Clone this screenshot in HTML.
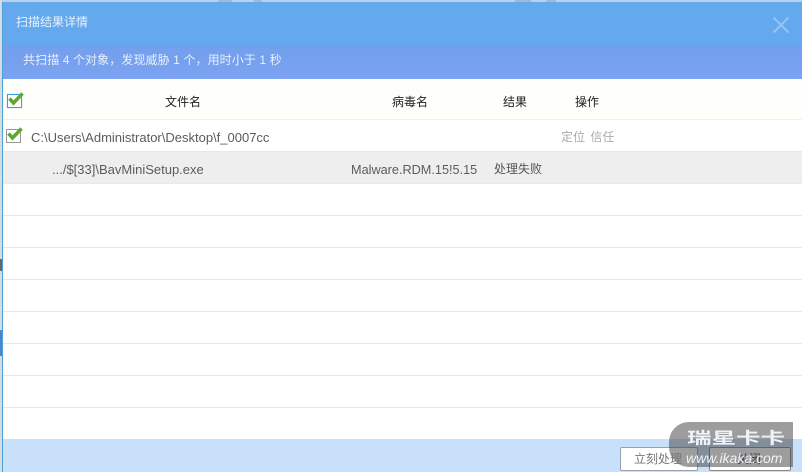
<!DOCTYPE html>
<html>
<head>
<meta charset="utf-8">
<style>
html,body{margin:0;padding:0;width:802px;height:472px;overflow:hidden;background:#fff}
body{position:relative;font-family:"Liberation Sans","Noto Sans CJK SC",sans-serif;font-size:12px;color:#555}
.a{position:absolute;white-space:nowrap}
.line{position:absolute;left:3px;right:0;height:1px;background:#e8e8e8}
</style>
</head>
<body>
<!-- background bits -->
<div class="a" style="left:0;top:0;width:802px;height:2px;background:#b9d3e6"></div>
<div class="a" style="left:218px;top:0;width:14px;height:2px;background:#9dbccd"></div>
<div class="a" style="left:254px;top:0;width:8px;height:2px;background:#9dbccd"></div>
<div class="a" style="left:515px;top:0;width:16px;height:2px;background:#9dbccd"></div>
<div class="a" style="left:546px;top:0;width:10px;height:2px;background:#9dbccd"></div>
<div class="a" style="left:0;top:0;width:2px;height:472px;background:#d4dde2"></div>
<div class="a" style="left:0;top:259px;width:2px;height:12px;background:#666"></div>
<div class="a" style="left:0;top:330px;width:2px;height:26px;background:#4a87d0"></div>
<div class="a" style="left:2px;top:2px;width:1px;height:470px;background:#4f9fd8"></div>

<!-- title -->
<div class="a" style="left:3px;top:2px;width:799px;height:44px;background:#64a9ee"></div>
<div class="a" style="left:16px;top:13px;font-size:12px;line-height:18px;color:#e6f1fc">扫描结果详情</div>
<svg class="a" style="left:771px;top:15px" width="20" height="20" viewBox="0 0 20 20"><path d="M2.500 2.500L17.500 17.500M17.500 2.500L2.500 17.500" stroke="#97c4f3" stroke-width="2" fill="none"/></svg>

<!-- summary -->
<div class="a" style="left:3px;top:46px;width:799px;height:33px;background:linear-gradient(#729fec,#7ba3f2)"></div>
<div class="a" style="left:23px;top:51px;font-size:12px;line-height:18px;color:#e8f0fc;letter-spacing:.1px">共扫描 4 个对象，发现威胁 1 个，用时小于 1 秒</div>

<!-- header -->
<div class="a" style="left:3px;top:79px;width:799px;height:40px;background:#fefefa"></div>
<div class="line" style="top:119px;background:#eef0f0"></div>
<div class="a" style="left:7px;top:94px;width:13px;height:12px;border:1px solid #3aa0d8;box-shadow:0 0 1px #8fd0f0;background:#fff"></div>
<svg class="a" style="left:7px;top:91px" width="18" height="15" viewBox="0 0 18 15"><path d="M2.500 7.500L6.500 12L15.500 2.500" stroke="#5fa82e" stroke-width="3.500" fill="none"/></svg>
<div class="a" style="left:165px;top:93px;line-height:18px;color:#222">文件名</div>
<div class="a" style="left:392px;top:93px;line-height:18px;color:#222">病毒名</div>
<div class="a" style="left:503px;top:93px;line-height:18px;color:#222">结果</div>
<div class="a" style="left:575px;top:93px;line-height:18px;color:#222">操作</div>

<!-- row 1 -->
<div class="a" style="left:6px;top:129px;width:13px;height:12px;border:1px solid #999;background:#fff"></div>
<svg class="a" style="left:6px;top:126px" width="18" height="15" viewBox="0 0 18 15"><path d="M2.500 7.500L6.500 12L15.500 2.500" stroke="#5fa82e" stroke-width="3.500" fill="none"/></svg>
<div class="a" style="left:31px;top:129px;line-height:18px;color:#5c5c5c;font-size:13px;width:240px;overflow:hidden">C:\Users\Administrator\Desktop\f_0007cc</div>
<div class="a" style="left:561px;top:128px;line-height:18px;color:#aaa;word-spacing:2px">定位 信任</div>
<div class="line" style="top:151px"></div>

<!-- row 2 -->
<div class="a" style="left:3px;top:152px;width:799px;height:31px;background:#eee"></div>
<div class="a" style="left:52px;top:161px;line-height:18px;color:#5c5c5c;font-size:13px">.../$[33]\BavMiniSetup.exe</div>
<div class="a" style="left:351px;top:161px;line-height:18px;color:#5c5c5c;font-size:12.700px">Malware.RDM.15!5.15</div>
<div class="a" style="left:494px;top:160px;line-height:18px;color:#555">处理失败</div>
<div class="line" style="top:183px"></div>

<div class="line" style="top:215px"></div>
<div class="line" style="top:247px"></div>
<div class="line" style="top:279px"></div>
<div class="line" style="top:311px"></div>
<div class="line" style="top:343px"></div>
<div class="line" style="top:375px"></div>
<div class="line" style="top:407px"></div>

<!-- footer -->
<div class="a" style="left:3px;top:439px;width:799px;height:33px;background:#c8e0f9"></div>
<div class="a" style="left:620px;top:447px;width:76px;height:22px;border:1px solid #98a2ac;border-radius:2px;background:#fff"></div>
<div class="a" style="left:709px;top:447px;width:80px;height:22px;border:1px solid #888;border-radius:2px;background:#fff"></div>

<!-- watermark -->
<div class="a" style="left:669px;top:422px;width:124px;height:45px;background:rgba(60,60,60,.5);border-radius:20px 0 0 20px"></div>

<!-- button labels -->
<div class="a" style="left:634px;top:450px;line-height:18px;color:#777">立刻处理</div>
<div class="a" style="left:737px;top:450px;line-height:18px;color:#4a4a4a">关闭</div>

<div class="a" style="left:687px;top:425px;font-size:24.500px;line-height:28px;font-weight:bold;color:#eef3f8;transform:scaleY(.65);transform-origin:50% 50%">瑞星卡卡</div>
<div class="a" style="left:686px;top:450px;font-size:14px;line-height:16px;font-style:italic;color:#eef3f8">www.ikaka.com</div>
</body>
</html>
